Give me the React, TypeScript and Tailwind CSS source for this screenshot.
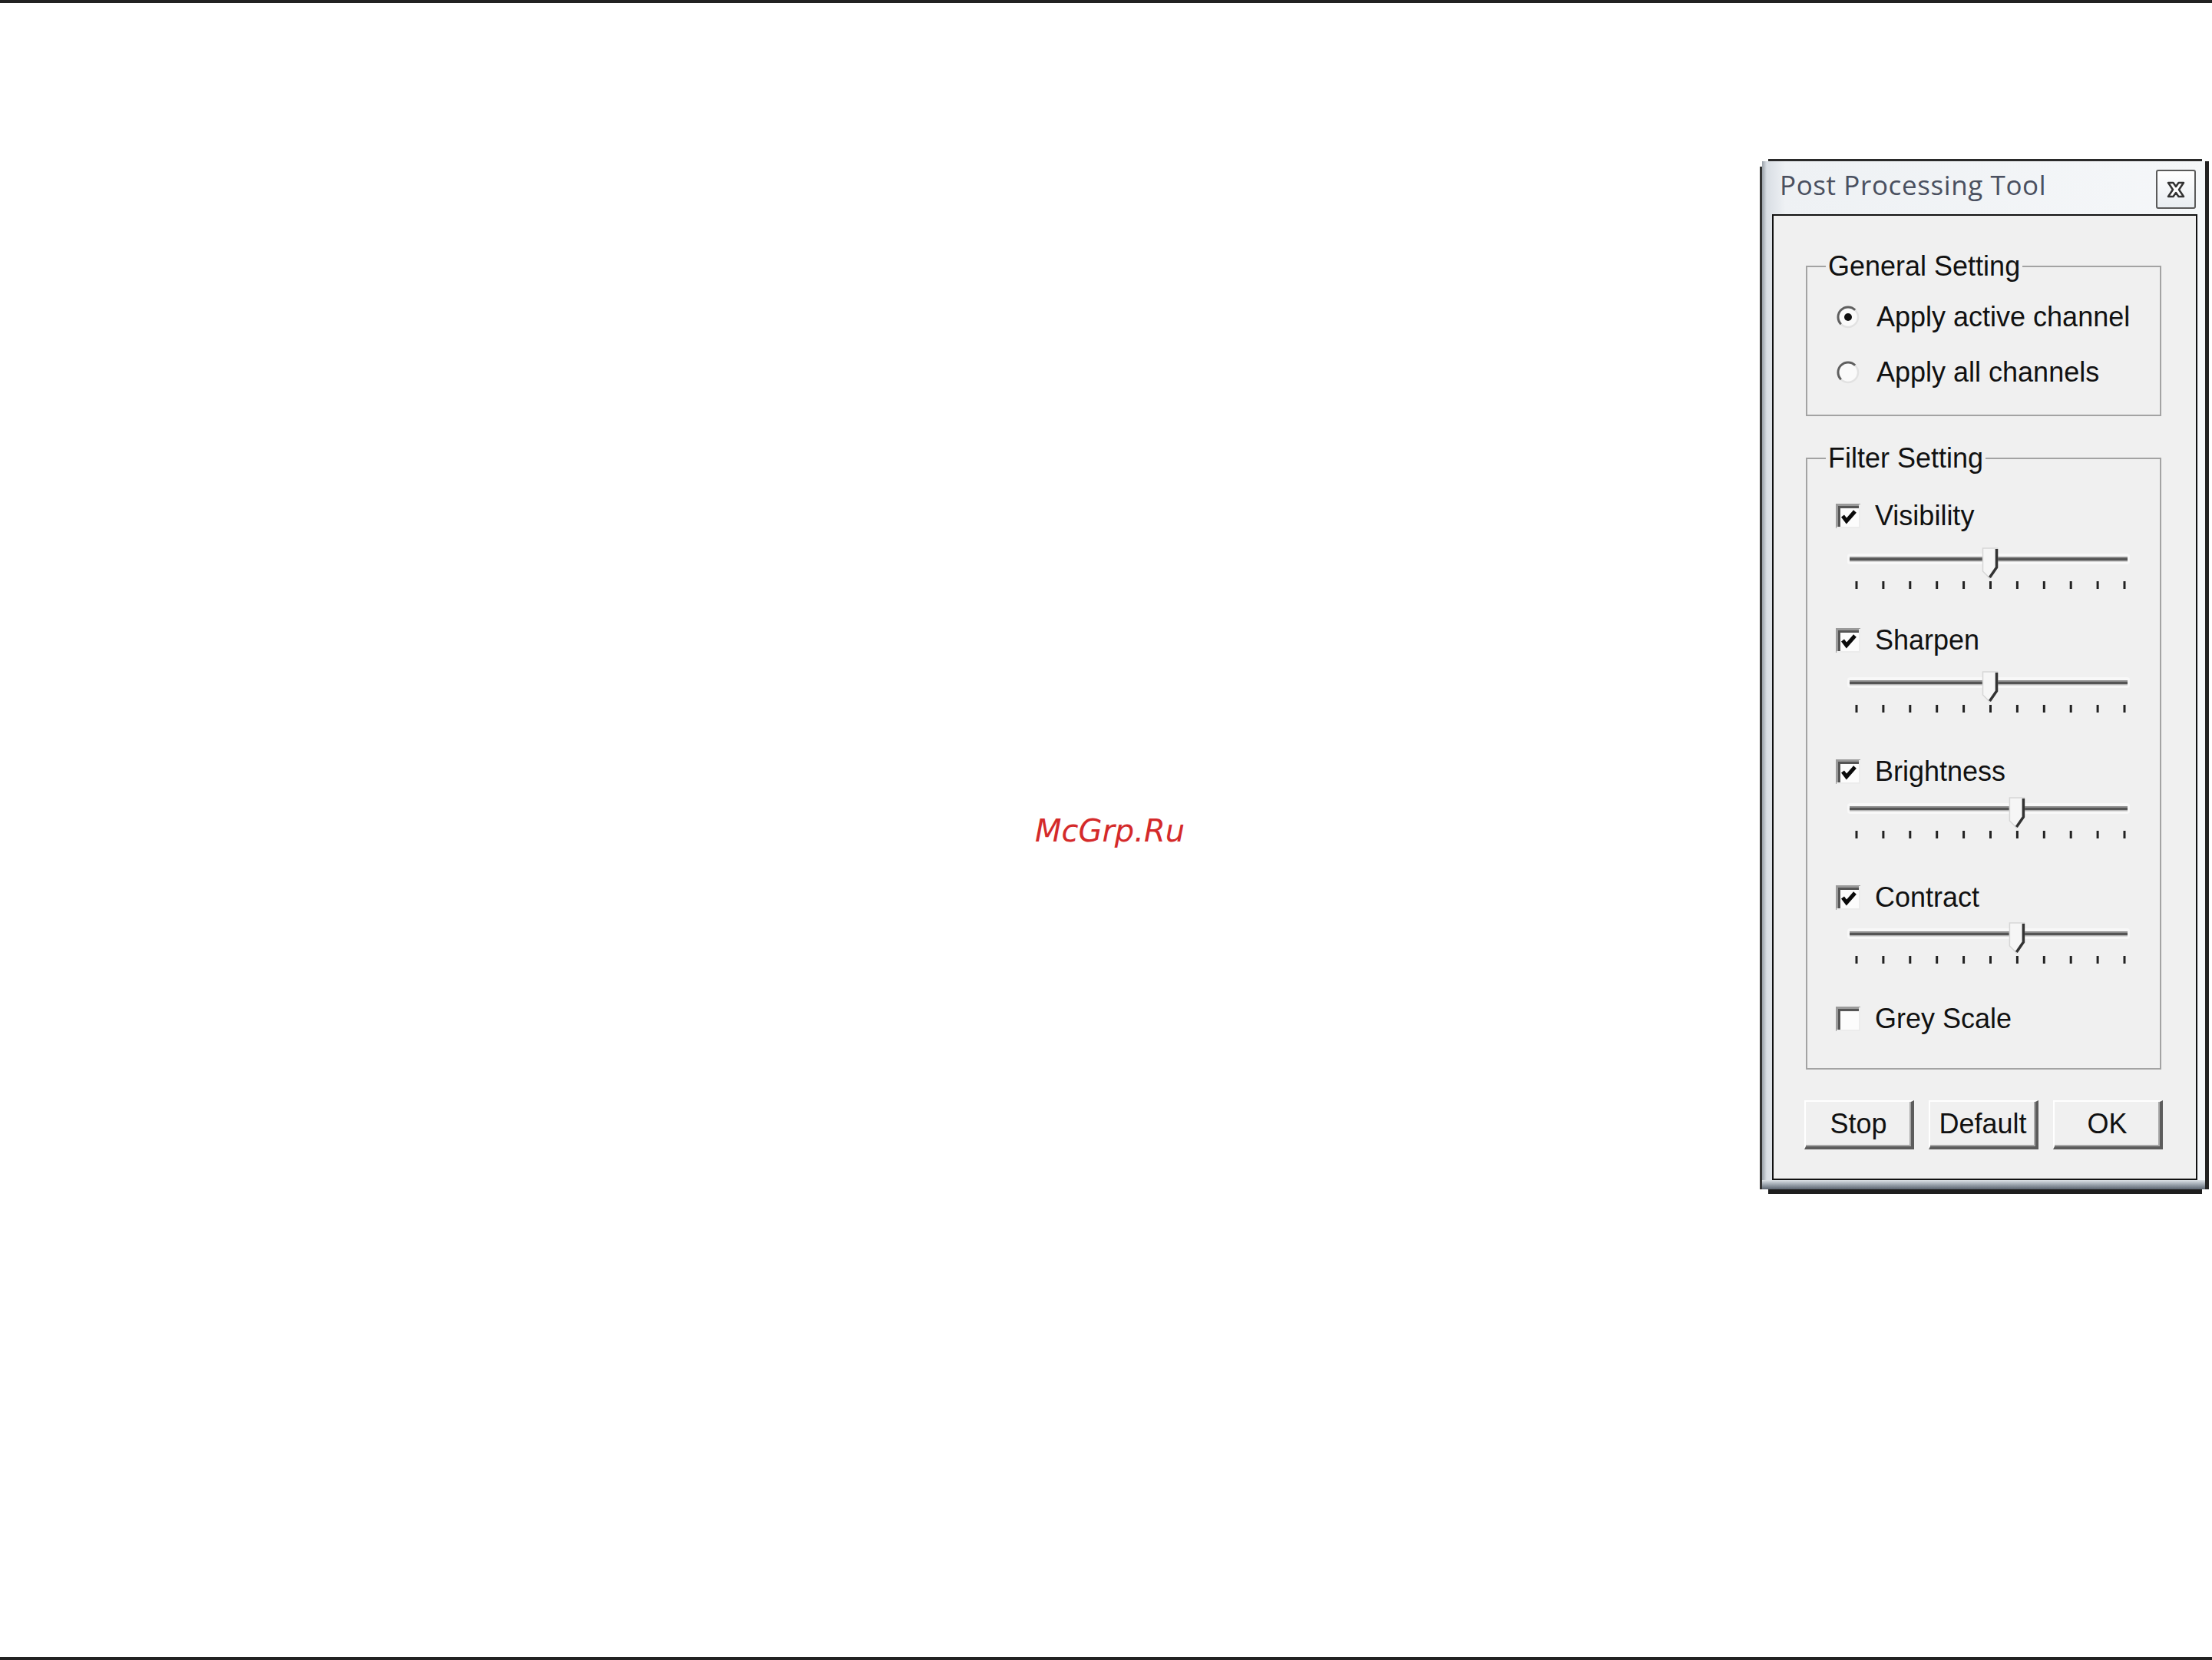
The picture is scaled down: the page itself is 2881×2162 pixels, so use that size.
import React from 'react';

const TICKS = Array.from({ length: 11 }, (_, i) => i);
const tickX = (i: number) => 18 + i * 34.9;

const Radio = ({ checked }: { checked?: boolean }) => (
  <svg width="30" height="30" viewBox="0 0 30 30" className="shrink-0">
    <circle cx="15" cy="15" r="13" fill="#fafafa" />
    <path d="M24.2 5.8 A13 13 0 0 1 5.8 24.2" stroke="#e2e2e2" strokeWidth="2.5" fill="none" />
    <path d="M5.8 24.2 A13 13 0 0 1 24.2 5.8" stroke="#5f5f5f" strokeWidth="3" fill="none" />
    {checked && <circle cx="15" cy="15" r="5" fill="#111" />}
  </svg>
);

const Checkbox = ({ checked }: { checked?: boolean }) => (
  <svg width="32" height="32" viewBox="0 0 32 32" className="shrink-0">
    <rect x="0" y="0" width="32" height="32" fill="#fcfcfc" />
    <path d="M1.5 32 V1.5 H32" stroke="#9a9a9a" strokeWidth="3" fill="none" />
    <path d="M4.5 30 V4.5 H30" stroke="#555" strokeWidth="3" fill="none" />
    <path d="M31 1 V31 H1" stroke="#ececec" strokeWidth="2" fill="none" />
    {checked && (
      <path d="M9 16 L14 22.5 L25 10" stroke="#0a0a0a" strokeWidth="5" fill="none" strokeLinejoin="miter" />
    )}
  </svg>
);

const Slider = ({ pos }: { pos: number }) => {
  const cx = tickX(pos);
  return (
    <svg width="380" height="62" viewBox="0 0 380 62" className="block">
      <rect x="6" y="11" width="368" height="14" rx="4" fill="#f8f8f8" />
      <rect x="9" y="15" width="362" height="2" fill="#8c8c8c" />
      <rect x="9" y="17" width="362" height="3" fill="#555" />
      <rect x="9" y="20" width="362" height="1.5" fill="#b5b5b5" />
      {TICKS.map((i) => (
        <rect key={i} x={tickX(i) - 1.5} y="47" width="3" height="10" fill="#222" />
      ))}
      <polygon
        points={`${cx - 10},4 ${cx + 9},4 ${cx + 9},29 ${cx - 1},43 ${cx - 10},34`}
        fill="#f6f6f6"
        stroke="#d6d6d6"
        strokeWidth="1.5"
      />
      <polyline points={`${cx + 8},5 ${cx + 8},29 ${cx - 1},42`} stroke="#333" strokeWidth="3.5" fill="none" />
    </svg>
  );
};

const Legend = ({ children }: { children: React.ReactNode }) => (
  <legend className="ml-[24px] px-[3px] text-[36px] leading-[40px] text-[#111]">{children}</legend>
);

const CheckRow = ({ label, checked, className }: { label: string; checked?: boolean; className: string }) => (
  <div className={`flex h-[40px] items-center pl-[37px] ${className}`}>
    <Checkbox checked={checked} />
    <span className="ml-[19px] text-[36px] leading-[40px] text-[#111]">{label}</span>
  </div>
);

const SliderRow = ({ pos, className }: { pos: number; className: string }) => (
  <div className={`pl-[46px] ${className}`}>
    <Slider pos={pos} />
  </div>
);

const Button = ({ label }: { label: string }) => (
  <div className="flex h-[64px] w-[143px] items-center justify-center border-t-2 border-l-2 border-r-[4px] border-b-[4px] border-t-white border-l-white border-r-[#5c5c5c] border-b-[#5c5c5c] bg-[#f0f0f0] text-[36px] leading-[40px] text-[#111] shadow-[inset_-2px_-2px_0_#a8a8a8]">
    {label}
  </div>
);

const App = () => {
  return (
    <div className="relative h-[2162px] w-[2881px] overflow-hidden border-y-4 border-[#222] bg-white font-['Liberation_Sans',Arial,sans-serif]">
      {/* watermark */}
      <div className="absolute left-0 right-0 top-[1058px] pl-[10px] text-center font-['DejaVu_Sans',sans-serif] text-[40px] italic leading-[40px] text-[#d42a2a]">
        McGrp.Ru
      </div>

      {/* dialog */}
      <div className="ml-[2292px] mt-[203px] flex w-[585px] flex-col">
        <div className="ml-[11px] mr-[9px] h-[3px] bg-[#2a2a2a]" />
        <div className="flex h-[1339px]">
          <div className="mt-[7px] w-[3px] bg-[#333]" />
          <div className="flex flex-1 flex-col bg-[linear-gradient(90deg,#9aa1a9_0px,#d9dee4_6px,#eef1f4_30px,#f5f7f9_100%)]">
            {/* title bar */}
            <div className="flex h-[69px] items-start justify-between">
              <span className="ml-[23px] pt-[11px] font-['Open_Sans',sans-serif] text-[35px] leading-[40px] tracking-[0.6px] text-[#4a5060]">
                Post Processing Tool
              </span>
              <div className="mr-[12px] mt-[11px] flex h-[51px] w-[52px] items-center justify-center rounded-[3px] border-2 border-[#5a5a5a] bg-[linear-gradient(180deg,#ffffff,#e9edf1)]">
                <svg width="26" height="24" viewBox="0 0 26 24">
                  <path
                    d="M3 3 L9.5 3 L13 8 L16.5 3 L23 3 L17 12 L23 21 L16.5 21 L13 16 L9.5 21 L3 21 L9 12 Z"
                    fill="#fff"
                    stroke="#333"
                    strokeWidth="2.5"
                    strokeLinejoin="round"
                  />
                </svg>
              </div>
            </div>

            {/* client area */}
            <div className="ml-[13px] mr-[10px] h-[1258px] border-2 border-[#111] bg-[#f0f0f0]">
              <fieldset className="ml-[42px] mr-[45px] mt-[46px] border-2 border-[#a3a3a3] pb-[35px]">
                <Legend>General Setting</Legend>
                <div className="mt-[26px] flex h-[40px] items-center pl-[38px]">
                  <Radio checked />
                  <span className="ml-[22px] text-[36px] leading-[40px] text-[#111]">Apply active channel</span>
                </div>
                <div className="mt-[32px] flex h-[40px] items-center pl-[38px]">
                  <Radio />
                  <span className="ml-[22px] text-[36px] leading-[40px] text-[#111]">Apply all channels</span>
                </div>
              </fieldset>

              <fieldset className="ml-[42px] mr-[45px] mt-[35px] border-2 border-[#a3a3a3] pb-[44px]">
                <Legend>Filter Setting</Legend>
                <CheckRow label="Visibility" checked className="mt-[35px]" />
                <SliderRow pos={5} className="mt-[18px]" />
                <CheckRow label="Sharpen" checked className="mt-[42px]" />
                <SliderRow pos={5} className="mt-[17px]" />
                <CheckRow label="Brightness" checked className="mt-[52px]" />
                <SliderRow pos={6} className="mt-[10px]" />
                <CheckRow label="Contract" checked className="mt-[52px]" />
                <SliderRow pos={6} className="mt-[9px]" />
                <CheckRow label="Grey Scale" className="mt-[47px]" />
              </fieldset>

              <div className="mt-[40px] flex gap-[19px] pl-[40px]">
                <Button label="Stop" />
                <Button label="Default" />
                <Button label="OK" />
              </div>
            </div>

            <div className="h-[12px] bg-[linear-gradient(180deg,#dde2e7,#9aa3ad_50%,#5b6470)]" />
          </div>
          <div className="w-[5px] bg-[#222]" />
        </div>
        <div className="ml-[11px] mr-[9px] h-[6px] bg-[#1e1e1e]" />
      </div>
    </div>
  );
};

export default App;
